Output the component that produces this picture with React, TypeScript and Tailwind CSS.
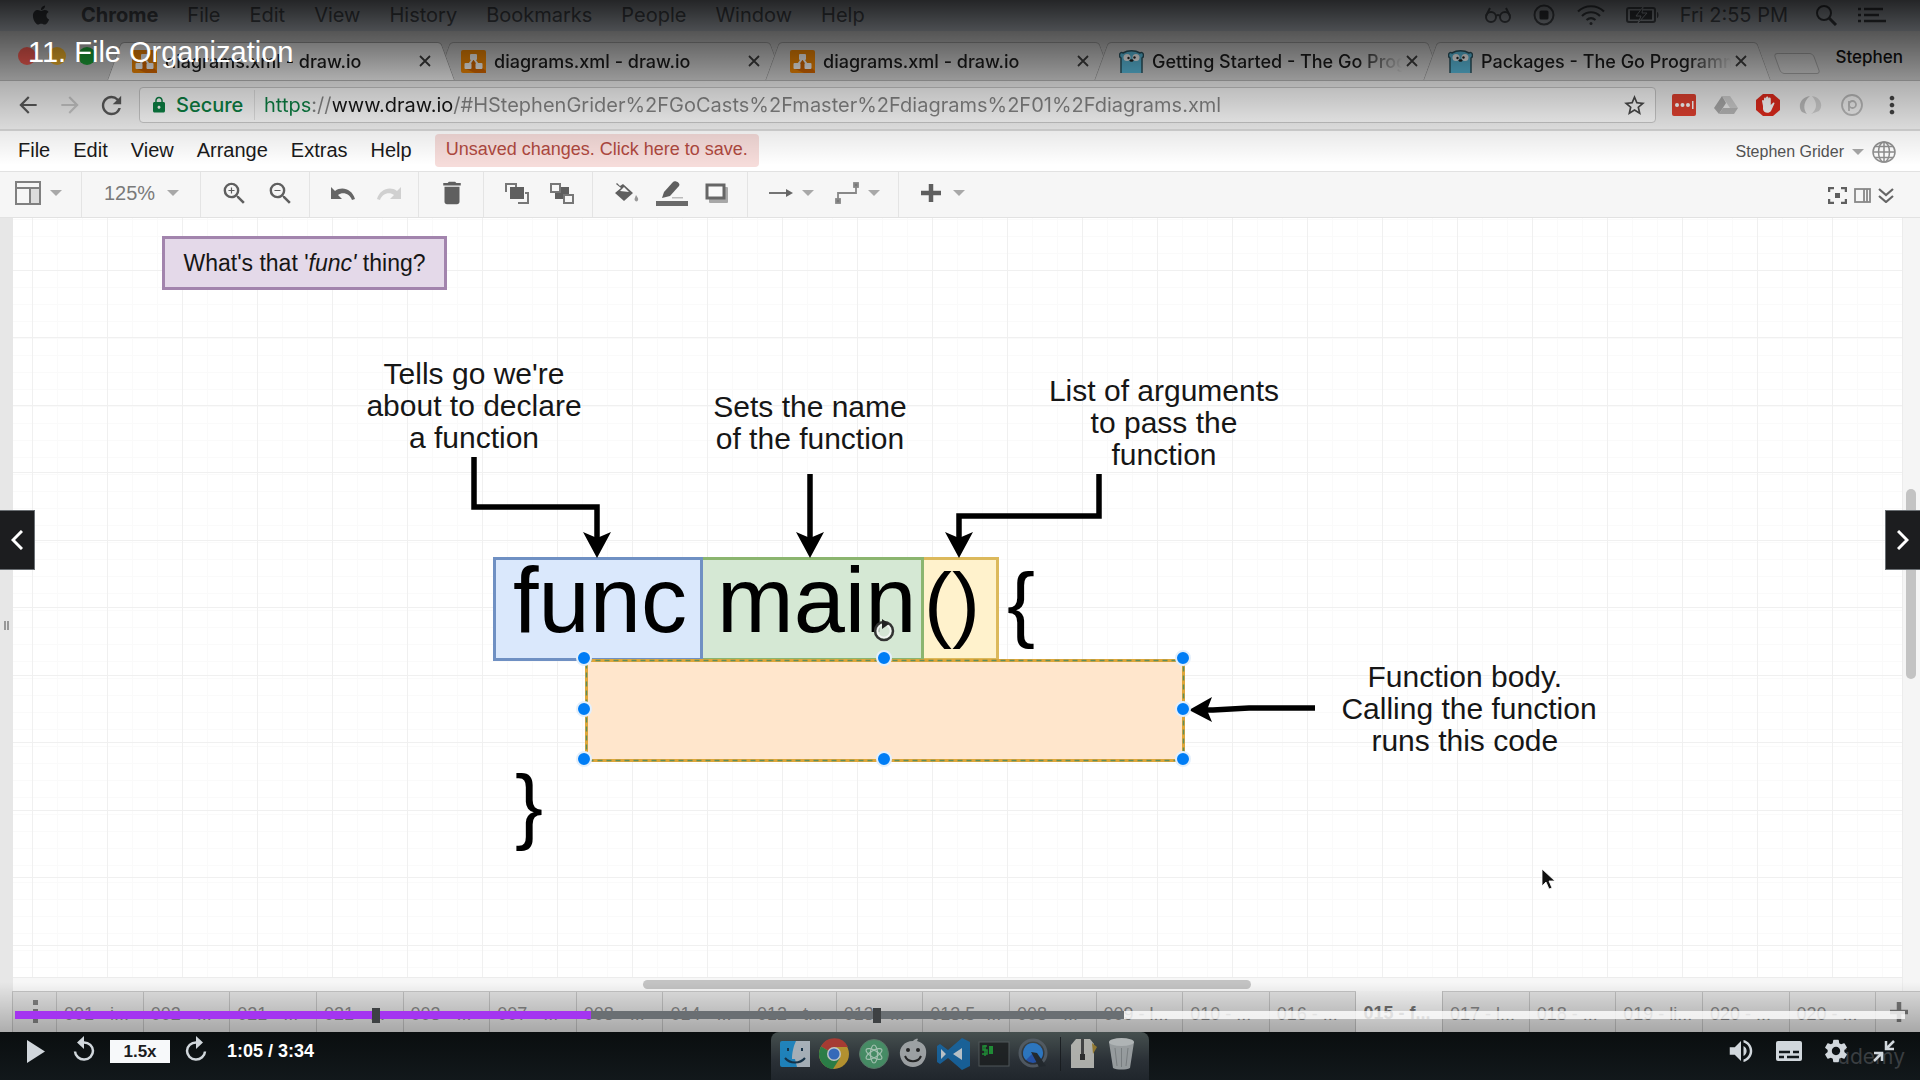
import type { CSSProperties, ReactNode } from "react";
import { FaApple } from "react-icons/fa";
import {
  MdArrowBack,
  MdArrowForward,
  MdRefresh,
  MdLock,
  MdMoreVert,
  MdDelete,
  MdZoomIn,
  MdZoomOut,
  MdVolumeUp,
  MdSettings,
  MdStarBorder,
} from "react-icons/md";

/* ---------- macOS menu bar ---------- */

const MENU_ITEMS = ["File", "Edit", "View", "History", "Bookmarks", "People", "Window", "Help"];

function MenuBar() {
  return (
    <header className="flex h-[31px] shrink-0 items-center justify-between bg-[#b4bac2] pb-[2px] pl-[30px] pr-[34px] font-[Inter,sans-serif] text-[20px] leading-none text-[#4d5157]">
      <nav className="flex items-center gap-[29px]">
        <FaApple className="size-[22px] text-[#3a3d42]" />
        <button className="font-bold">Chrome</button>
        {MENU_ITEMS.map((m) => (
          <button key={m}>{m}</button>
        ))}
      </nav>
      <div className="flex items-center gap-[20px]">
        <svg width="28" height="18" viewBox="0 0 28 18" fill="none" stroke="currentColor" strokeWidth="2">
          <circle cx="7" cy="11" r="5" />
          <circle cx="21" cy="11" r="5" />
          <path d="M12 10c1-1.500 3-1.500 4 0M2 10L6 2M26 10L22 2" />
        </svg>
        <svg width="24" height="22" viewBox="0 0 24 22">
          <circle cx="12" cy="11" r="9.500" fill="none" stroke="currentColor" strokeWidth="2" />
          <rect x="7.500" y="6.500" width="9" height="9" rx="1.500" fill="#3a3d42" />
        </svg>
        <svg width="30" height="22" viewBox="0 0 30 22" fill="none" stroke="#43474c" strokeWidth="2.200">
          <path d="M2 7.500C9 .5 21 .5 28 7.500M6 12c5-5 13-5 18 0M10.500 16c3-2.500 6-2.500 9 0" />
          <circle cx="15" cy="19.500" r="1.500" fill="#43474c" stroke="none" />
        </svg>
        <svg width="34" height="18" viewBox="0 0 34 18">
          <rect x="1" y="2" width="28" height="14" rx="2" fill="none" stroke="currentColor" strokeWidth="2" />
          <rect x="4" y="4.500" width="22" height="9" fill="#3a3d42" />
          <path d="M17 1l-7 9h5l-3 7 9-10h-5z" fill="#3a3d42" stroke="#b4bac2" />
          <path d="M31 6c2 0 2 6 0 6z" fill="currentColor" />
        </svg>
        <span className="mr-1.5">Fri 2:55 PM</span>
        <svg width="24" height="22" viewBox="0 0 24 22" fill="none" stroke="#3a3d42" strokeWidth="2">
          <circle cx="10" cy="9" r="7" />
          <path d="M15 14l7 7" strokeWidth="3" />
        </svg>
        <svg width="28" height="18" viewBox="0 0 28 18" stroke="#3a3d42" strokeWidth="2.500">
          <path d="M0 3h3M0 9h3M0 15h3M6 3h19M6 9h15M6 15h22" />
        </svg>
      </div>
    </header>
  );
}

/* ---------- Browser tabs ---------- */

function DrawioIcon() {
  return (
    <svg width="25" height="23" viewBox="0 0 25 23" className="shrink-0">
      <rect width="25" height="23" rx="2" fill="#f08705" />
      <path d="M12 9l13 12v2H14L5 19z" fill="#d86800" />
      <path d="M12.500 8L7 16M12.500 8L18 16" stroke="#fff" strokeWidth="2" />
      <rect x="9" y="4" width="7" height="6" rx="1" fill="#fff" />
      <rect x="3.500" y="13" width="7" height="6" rx="1" fill="#fff" />
      <rect x="14.500" y="13" width="7" height="6" rx="1" fill="#fff" />
    </svg>
  );
}

function GopherIcon() {
  return (
    <svg width="25" height="23" viewBox="0 0 25 23" className="shrink-0">
      <path d="M2 23V8C-1 6 1 1 4 3c5-3 12-3 17 0 3-2 5 3 2 5v15z" fill="#5dc0e2" />
      <path d="M2 23V8C-1 6 1 1 4 3c5-3 12-3 17 0 3-2 5 3 2 5v15" fill="none" stroke="#2d5562" strokeWidth="1.500" />
      <circle cx="8" cy="7.500" r="3.500" fill="#fff" />
      <circle cx="17" cy="7.500" r="3.500" fill="#fff" />
      <circle cx="9.500" cy="8" r="1.200" fill="#222" />
      <circle cx="15.500" cy="7.500" r="1.200" fill="#222" />
      <ellipse cx="12.500" cy="10.500" rx="2" ry="1.300" fill="#222" />
    </svg>
  );
}

function Tab({ title, icon, active }: { title: string; icon: ReactNode; active?: boolean }) {
  const fill = active ? "bg-[#f0f0f0] " : "bg-[#d2d2d2] ";
  return (
    <div className={"relative flex h-[38px] w-[329px] shrink-0 items-center pl-[18px] " + (active ? "z-10" : "")}>
      <span className={fill + "absolute inset-y-0 left-0 w-1/2 -skew-x-[20deg] rounded-tl border-l border-t border-[#a0a0a0]"} />
      <span className={fill + "absolute -right-1 inset-y-0 w-1/2 skew-x-[20deg] rounded-tr border-r border-t border-[#a0a0a0]"} />
      <span className={fill + "absolute inset-x-[100px] inset-y-0 border-t border-[#a0a0a0]"} />
      <div className="relative flex w-full items-center">
        {icon}
        <span className="ml-2 w-[258px] overflow-hidden whitespace-nowrap mask-r-from-80% mask-r-to-97% text-[18px] font-medium text-[#1c1c1c]">
          {title}
        </span>
        <button aria-label="Close tab" className="-ml-1 shrink-0">
          <svg width="12" height="12" viewBox="0 0 12 12" stroke="#3c3c3c" strokeWidth="1.800">
            <path d="M1 1l10 10M11 1L1 11" />
          </svg>
        </button>
      </div>
    </div>
  );
}

function TabStrip() {
  return (
    <div className="isolate flex h-[50px] shrink-0 items-end overflow-hidden border-b border-[#b5b5b5] bg-[#cacaca] font-[Inter,sans-serif]">
      <div className="flex h-full w-[114px] shrink-0 items-center gap-3 pl-[18px]">
        <span className="size-[18px] rounded-full bg-[#fb5f55]" />
        <span className="size-[18px] rounded-full bg-[#f5b62b]" />
        <span className="size-[18px] rounded-full bg-[#1fa83a]" />
      </div>
      <Tab active title="diagrams.xml - draw.io" icon={<DrawioIcon />} />
      <Tab title="diagrams.xml - draw.io" icon={<DrawioIcon />} />
      <Tab title="diagrams.xml - draw.io" icon={<DrawioIcon />} />
      <Tab title="Getting Started - The Go Programming" icon={<GopherIcon />} />
      <Tab title="Packages - The Go Programming" icon={<GopherIcon />} />
      <button
        aria-label="New tab"
        className="mb-[6px] ml-[18px] h-[21px] w-[40px] shrink-0 skew-x-[20deg] rounded border border-[#a0a0a0] bg-[#cfcfcf]"
      />
      <span className="mb-3 ml-auto pr-[17px] text-[17px] font-medium leading-[22px] text-[#111]">Stephen</span>
    </div>
  );
}

/* ---------- Address bar ---------- */

function AddressBar() {
  return (
    <div className="flex h-[50px] shrink-0 items-center border-b-2 border-[#dadada] bg-[#f1f1f1] pl-[15px] pr-[14px] font-[Inter,sans-serif] text-[20px]">
      <button aria-label="Back">
        <MdArrowBack className="size-[26px] text-[#5a5a5a]" />
      </button>
      <button aria-label="Forward" className="ml-4">
        <MdArrowForward className="size-[26px] text-[#c8c8c8]" />
      </button>
      <button aria-label="Reload" className="ml-[14px]">
        <MdRefresh className="size-[29px] text-[#5a5a5a]" />
      </button>
      <div className="ml-[13px] flex h-[36px] flex-1 items-center rounded border border-[#c9c9c9] bg-[#fcfcfc] pl-2.5 pr-2">
        <MdLock className="size-[18px] text-[#0b8043]" />
        <span className="ml-2 w-[78px] font-medium text-[#0b8043]">Secure</span>
        <input
          aria-label="Address"
          readOnly
          value="https://www.draw.io/#HStephenGrider%2FGoCasts%2Fmaster%2Fdiagrams%2F01%2Fdiagrams.xml"
          className="min-w-0 flex-1 border-l border-[#e2e2e2] bg-[linear-gradient(90deg,#0b8043_58px,#858585_58px,#858585_78px,#161616_78px,#161616_198px,#858585_198px)] bg-clip-text pl-[9px] text-transparent outline-none"
        />
        <button aria-label="Bookmark">
          <MdStarBorder className="size-[25px] text-[#4a4a4a]" />
        </button>
      </div>
      <div className="flex items-center gap-[18px] pl-[16px]">
        <svg width="24" height="22" viewBox="0 0 24 22">
          <rect width="24" height="22" rx="2" fill="#e0402f" />
          <g fill="#fff">
            <circle cx="5" cy="11" r="2" />
            <circle cx="10.500" cy="11" r="2" />
            <circle cx="16" cy="11" r="2" />
            <rect x="20" y="7" width="1.500" height="8" />
          </g>
        </svg>
        <svg width="24" height="20" viewBox="0 0 24 20">
          <path d="M8 1h8l8 12H16z" fill="#cfcfcf" />
          <path d="M8 1l4 7-7 11-5-6z" fill="#a9a9a9" />
          <path d="M9 13h15l-4 6H5z" fill="#b9b9b9" />
        </svg>
        <svg width="24" height="22" viewBox="0 0 24 22">
          <path d="M7 0h10l7 6v10l-7 6H7l-7-6V6z" fill="#df2a1c" />
          <path
            d="M7 12l-1-5c0-1.500 2-1.500 2 0V5c0-2 2-2 2 0V4c0-2 2.500-2 2.500 0v1c0-2 2.300-2 2.300 0v6l2-2c1.500-1 2.200 0 1.200 1.500L15 17c-2 3-8 2-8-2z"
            fill="#fff"
          />
        </svg>
        <svg width="24" height="20" viewBox="0 0 24 20">
          <path d="M12 1C3 2-1 11 4 17l5 2C5 14 5 7 12 1z" fill="#bdbdbd" />
          <path d="M14 1c8 1 12 9 7 15l-8 3c6-4 7-11 1-18z" fill="#d0d0d0" />
        </svg>
        <svg width="24" height="22" viewBox="0 0 24 22" fill="none" stroke="#b9b9b9" strokeWidth="1.800">
          <circle cx="12" cy="11" r="10" />
          <circle cx="12.500" cy="10.500" r="3.500" />
          <path d="M9 7v10" />
        </svg>
        <button aria-label="Browser menu" className="-ml-1">
          <MdMoreVert className="size-[28px] text-[#444]" />
        </button>
      </div>
    </div>
  );
}

/* ---------- draw.io ---------- */

const APP_MENU = ["File", "Edit", "View", "Arrange", "Extras", "Help"];

function AppMenu() {
  return (
    <div className="flex h-[40px] shrink-0 items-center justify-between bg-white pb-[2px] pl-[18px] pr-[24px]">
      <div className="flex items-center gap-[23px] text-[20px] leading-none text-[#1a1a1a]">
        {APP_MENU.map((m) => (
          <button key={m}>{m}</button>
        ))}
        <button className="h-[33px] whitespace-nowrap rounded bg-[#f6dcda] px-[11px] pb-[2px] text-[18px] text-[#b0493f]">
          Unsaved changes. Click here to save.
        </button>
      </div>
      <div className="flex items-center gap-2 pt-1">
        <button className="flex items-center gap-2 text-[16px] text-[#555]">
          Stephen Grider
          <Caret />
        </button>
        <svg width="24" height="22" viewBox="0 0 24 22" fill="none" stroke="#909090" strokeWidth="1.500">
          <ellipse cx="12" cy="11" rx="11" ry="10" />
          <ellipse cx="12" cy="11" rx="5.500" ry="10" />
          <path d="M12 1v20M1 11h22M3 5.500h18M3 16.500h18" />
        </svg>
      </div>
    </div>
  );
}

function Caret() {
  return (
    <svg width="12" height="6" viewBox="0 0 12 6" className="shrink-0">
      <path d="M0 0h12L6 6z" fill="#a8a8a8" />
    </svg>
  );
}

function Group({ className, children }: { className: string; children: ReactNode }) {
  return (
    <div className={"flex h-full shrink-0 items-center border-r border-[#e4e4e4] pb-[3px] " + className}>{children}</div>
  );
}

function Toolbar() {
  return (
    <div className="flex h-[47px] shrink-0 items-center border-y border-[#e2e2e2] bg-[#f6f6f6] pr-[26px] text-[#5f5f5f]">
      <Group className="w-[82px] gap-[9px] pl-[15px]">
        <svg width="26" height="24" viewBox="0 0 26 24" fill="none" stroke="#808080" strokeWidth="2">
          <rect x="15" y="7" width="10" height="16" fill="#ddd" stroke="none" />
          <rect x="1" y="1" width="24" height="22" />
          <path d="M1 7h24M15 7v16" />
        </svg>
        <Caret />
      </Group>
      <Group className="w-[119px] pl-[22px]">
        <button className="flex items-center gap-[12px] text-[20px] text-[#7a7a7a]">
          125% <Caret />
        </button>
      </Group>
      <Group className="w-[109px] gap-[17px] pl-[19px]">
        <button aria-label="Zoom in">
          <MdZoomIn className="size-[29px]" />
        </button>
        <button aria-label="Zoom out">
          <MdZoomOut className="size-[29px]" />
        </button>
      </Group>
      <Group className="w-[109px] gap-[22px] pl-[21px]">
        <svg width="24" height="14" viewBox="0 0 24 14">
          <path d="M0 1v12h11L7 9c5-4 12-1 14 5l3-1C21 3 11 0 4 5z" fill="#666" />
        </svg>
        <svg width="24" height="14" viewBox="0 0 24 14">
          <path d="M24 1v12H13l4-4C12 5 5 8 3 14l-3-1C3 3 13 0 20 5z" fill="#d0d0d0" />
        </svg>
      </Group>
      <Group className="w-[65px] pl-[18px]">
        <button aria-label="Delete">
          <MdDelete className="size-[30px]" />
        </button>
      </Group>
      <Group className="w-[109px] gap-[21px] pl-[21px]">
        <svg width="24" height="21" viewBox="0 0 24 21" fill="none" stroke="#777" strokeWidth="2">
          <path d="M1 9V1h10v3M13 20h10V10h-3" />
          <rect x="5" y="4" width="14" height="12" fill="#5f5f5f" stroke="none" />
        </svg>
        <svg width="24" height="21" viewBox="0 0 24 21" stroke="#777" strokeWidth="2">
          <rect x="5" y="4" width="14" height="12" fill="#5f5f5f" stroke="none" />
          <rect x="1" y="1" width="9" height="8" fill="#f6f6f6" />
          <rect x="14" y="12" width="9" height="8" fill="#f6f6f6" />
        </svg>
      </Group>
      <Group className="w-[155px] gap-[17px] pl-[22px]">
        <svg width="24" height="22" viewBox="0 0 24 22" fill="#5f5f5f">
          <path d="M2 1l3 3 3-2 10 9-9 8L0 11l6-5-5-4z" />
          <path d="M5 9l4-4 5 5z" fill="#f6f6f6" />
          <path d="M21 13c2 3 3 4 1.500 6-1 1-3 0-3-2z" fill="#999" />
        </svg>
        <svg width="32" height="26" viewBox="0 0 32 26">
          <path d="M6 18l2-6 9-10c2-2 8 1 6 4l-9 10z" fill="#5f5f5f" />
          <rect x="16" y="17" width="11" height="1.500" fill="#bbb" />
          <rect y="21" width="32" height="5" fill="#6a6a6a" />
        </svg>
        <svg width="24" height="20" viewBox="0 0 24 20">
          <rect x="4" y="4" width="19" height="16" rx="1" fill="#a8a8a8" />
          <rect x="2" y="2" width="17" height="13" fill="#f9f9f9" stroke="#666" strokeWidth="3" />
        </svg>
      </Group>
      <Group className="w-[151px] gap-[9px] pl-[21px]">
        <svg width="24" height="10" viewBox="0 0 24 10">
          <path d="M0 5h18" stroke="#666" strokeWidth="1.800" />
          <path d="M17 1l7 4-7 4z" fill="#666" />
        </svg>
        <Caret />
        <svg width="24" height="22" viewBox="0 0 24 22" fill="none" stroke="#888" strokeWidth="1.800" className="ml-3">
          <path d="M3 19V11h18V3" />
          <rect x="1" y="17" width="4" height="4" fill="#777" />
          <rect x="19" y="1" width="4" height="4" fill="#777" />
        </svg>
        <Caret />
      </Group>
      <button aria-label="Insert" className="ml-[22px] flex items-center gap-3 pb-[3px]">
        <svg width="20" height="18" viewBox="0 0 20 18" stroke="#5f5f5f" strokeWidth="4.500">
          <path d="M10 0v18M0 9h20" />
        </svg>
        <Caret />
      </button>
      <div className="ml-auto flex items-center gap-[7px] pt-[2px]">
        <svg width="19" height="17" viewBox="0 0 19 17" fill="none" stroke="#5f5f5f" strokeWidth="2.500">
          <path d="M1 5V1h5M13 1h5v4M18 12v4h-5M6 16H1v-4" />
          <rect x="7" y="6" width="5" height="5" fill="#5f5f5f" stroke="none" />
        </svg>
        <svg width="17" height="15" viewBox="0 0 17 15" fill="none" stroke="#888" strokeWidth="1.800">
          <rect x="1" y="1" width="15" height="13" />
          <path d="M10 1v13M13 1v13" />
        </svg>
        <svg width="16" height="15" viewBox="0 0 16 15" fill="none" stroke="#666" strokeWidth="2.200">
          <path d="M1 1l7 6 7-6M1 8l7 6 7-6" />
        </svg>
      </div>
    </div>
  );
}

/* Diagram nodes live on a free canvas, so each has a place of its own. */

function Note({ className, lines }: { className: string; lines: string[] }) {
  return (
    <p className={"absolute w-[300px] text-center text-[30px] leading-[32px] text-[#161616] " + className}>
      {lines.map((l) => (
        <span key={l} className="block whitespace-pre">
          {l}
        </span>
      ))}
    </p>
  );
}

const HANDLES = [
  [571, 440],
  [871, 440],
  [1170, 440],
  [571, 491],
  [1170, 491],
  [571, 541],
  [871, 541],
  [1170, 541],
];

const GRID: CSSProperties = {
  backgroundImage:
    "linear-gradient(90deg,#f0f0f0 1px,transparent 1px),linear-gradient(#f0f0f0 1px,transparent 1px),linear-gradient(#f0f0f0 1px,transparent 1px),linear-gradient(90deg,#fafafa 1px,transparent 1px),linear-gradient(#fafafa 1px,transparent 1px)",
  backgroundSize: "75px 75px,75px 135px,75px 135px,25px 25px,17px 17px",
  backgroundPosition: "19px 0,0 52px,0 119px,19px 0,0 52px",
};

function Canvas() {
  return (
    <div className="relative min-h-[759px] flex-1 overflow-hidden bg-white" style={GRID}>
      <div className="absolute left-[149px] top-[18px] flex h-[54px] w-[285px] items-center justify-center border-[3px] border-[#a284ad] bg-[#e4d9e9] text-[23px] text-[#161616]">
        <span className="whitespace-nowrap">
          What's that '<i>func'</i> thing?
        </span>
      </div>

      <Note className="left-[311px] top-[140px]" lines={["Tells go we're", "about to declare", "a function"]} />
      <Note className="left-[647px] top-[173px]" lines={["Sets the name", "of the function"]} />
      <Note className="left-[1001px] top-[157px]" lines={["List of arguments", "to pass the", "function"]} />
      <Note className="left-[1306px] top-[443px]" lines={["Function body. ", "Calling the function", "runs this code "]} />

      <div className="absolute left-[480px] top-[339px] flex text-[92px] leading-[80px] text-black">
        <span className="h-[104px] w-[210px] border-[3px] border-[#6f90c3] bg-[#dae8fc] pl-[17px]">func</span>
        <span className="h-[104px] w-[221px] border-[3px] border-l-0 border-[#8bb56f] bg-[#d5e8d4] pl-[14px]">main</span>
        <span className="h-[104px] w-[75px] border-[3px] border-l-0 border-[#dcb95c] bg-[#fff2cc] text-[84px] leading-[86px]">
          ()
        </span>
        <span className="pl-2 pt-[3px] text-[84px] leading-[86px]">{"{"}</span>
      </div>
      <span className="absolute left-[502px] top-[544px] text-[84px] leading-[86px] text-black">{"}"}</span>

      <div className="absolute left-[572px] top-[441px] h-[103px] w-[600px] border-[3px] border-[#dfa63a] bg-[#ffe6cc]" />

      <svg className="absolute left-0 top-0" width="1400" height="700" viewBox="0 0 1400 700" fill="none">
        <rect x="573.500" y="442.500" width="597" height="100" stroke="#5f8f5c" strokeWidth="1.500" strokeDasharray="5 4" />
        <g stroke="#000" strokeWidth="5.500">
          <path d="M461 239V289H584V325" />
          <path d="M797 256V325" />
          <path d="M1086 256V298H946V325" />
          <path d="M1302 490H1236L1200 492H1192" />
        </g>
        <g fill="#000">
          <path d="M584 340l-14-26 14 6 14-6z" />
          <path d="M797 340l-14-26 14 6 14-6z" />
          <path d="M946 340l-14-26 14 6 14-6z" />
          <path d="M1176 492l23-13-5 13 5 12z" />
        </g>
        <g fill="#007df5" stroke="#e3effb" strokeWidth="2">
          {HANDLES.map(([x, y]) => (
            <circle key={x + "-" + y} cx={x} cy={y} r="7" />
          ))}
        </g>
        <circle cx="871" cy="413" r="9" fill="#d5e2d4" fillOpacity="0.8" stroke="#333" strokeWidth="2.500" />
        <circle cx="871" cy="413" r="6.500" stroke="#f4f4f4" strokeWidth="1.500" />
        <path d="M869 401l7 5-7 5z" fill="#222" />
      </svg>

      <svg className="absolute left-[1528px] top-[650px]" width="16" height="24" viewBox="0 0 16 24">
        <path d="M1 1v17l4-4 3 7 3-1-3-7h6z" fill="#111" stroke="#fff" strokeWidth="0.800" />
      </svg>
    </div>
  );
}

const SHEETS = [
  "001 - i...",
  "002 - ...",
  "021 - ...",
  "021 - ...",
  "003 - ...",
  "007 - ...",
  "008 - ...",
  "014 - ...",
  "012 - t...",
  "013 - ...",
  "013.5 -...",
  "008 - ...",
  "009 - l...",
  "010 - ...",
  "016 - ...",
  "015 - f...",
  "017 - l...",
  "018 - ...",
  "019 - li...",
  "020 - ...",
  "020 - ...",
];

function SheetTabs() {
  return (
    <div className="ml-3 flex h-[41px] shrink-0 border-t border-[#c4c4c4] bg-[#e0e0e0] text-[18px] text-[#858585]">
      <button aria-label="Pages" className="w-[45px] shrink-0 border-x border-[#c0c0c0] pl-[20px]">
        <svg width="5" height="24" viewBox="0 0 5 24" fill="#808080">
          <path d="M0 0h5v5H0zM0 9h5v5H0zM0 18h5v5H0z" />
        </svg>
      </button>
      {SHEETS.map((s, i) => (
        <button
          key={i}
          className={
            "min-w-0 flex-1 overflow-hidden whitespace-nowrap border-r border-[#bdbdbd] pl-[7px] pt-1 text-left " +
            (s.startsWith("015") ? "-mt-px bg-[#f4f4f4] font-bold text-[#707070]" : "")
          }
        >
          {s}
        </button>
      ))}
      <button aria-label="Add page" className="w-[44px] shrink-0 pl-[14px]">
        <svg width="18" height="20" viewBox="0 0 18 20" stroke="#777" strokeWidth="4.500">
          <path d="M9 0v20M0 10h18" />
        </svg>
      </button>
    </div>
  );
}

/* ---------- Dock ---------- */

function Dock() {
  return (
    <div className="flex h-[48px] shrink-0 justify-center bg-[#0f1517] bg-[linear-gradient(#0a0e0f,#12181b)]">
      <div className="flex w-[378px] items-start gap-[7px] rounded-t-lg bg-[linear-gradient(#46504f,#2a3036_60%,#20262c)] pl-[8px] pt-[5px] *:opacity-85">
        <svg width="32" height="36" viewBox="0 0 32 36">
          <rect x="1" y="4" width="30" height="26" rx="2" fill="#1d8fd0" />
          <path d="M17 4h14v26H18l-2-8h-3c0-7 2-14 4-18z" fill="#b9c3cc" />
          <path d="M9 11v3M23 11v3M6 21c5 6 15 6 20 0" fill="none" stroke="#12324a" strokeWidth="2" />
        </svg>
        <svg width="33" height="36" viewBox="0 0 33 36">
          <circle cx="16" cy="17" r="15" fill="#c9a02e" />
          <path d="M16 17L3 9.500A15 15 0 0 1 30 10H16z" fill="#b93a31" />
          <path d="M16 17L3 9.500A15 15 0 0 0 15 32l7-11z" fill="#2b8a4a" />
          <circle cx="16" cy="17" r="7" fill="#d7dce0" />
          <circle cx="16" cy="17" r="5.500" fill="#3672cf" />
        </svg>
        <svg width="32" height="36" viewBox="0 0 32 36" fill="none">
          <circle cx="16" cy="17" r="14.500" fill="#4a9a6c" stroke="#5f7f6e" />
          <g stroke="#b6d8c4" strokeWidth="1.200">
            <ellipse cx="16" cy="17" rx="3.500" ry="9" />
            <ellipse cx="16" cy="17" rx="3.500" ry="9" transform="rotate(60 16 17)" />
            <ellipse cx="16" cy="17" rx="3.500" ry="9" transform="rotate(-60 16 17)" />
          </g>
        </svg>
        <svg width="32" height="36" viewBox="0 0 32 36">
          <path d="M16 4c3-3 5-2 5-2l-1 2c8 2 10 8 9 14-1 7-6 12-13 12S4 25 3 18C2 11 7 4 16 4z" fill="#aeb2b4" />
          <circle cx="11" cy="13" r="2" fill="#222" />
          <circle cx="21" cy="13" r="2" fill="#222" />
          <path d="M8 19c3 7 13 7 16 0" fill="none" stroke="#222" strokeWidth="2" />
        </svg>
        <svg width="35" height="36" viewBox="0 0 35 36">
          <path d="M26 1l8 4v24l-8 4L12 21l-8 6-3-2V9l3-2 8 6z" fill="#1567a6" />
          <path d="M5 12l5 5-5 5zM26 11v12l-9-6z" fill="#cfd8de" />
        </svg>
        <svg width="32" height="36" viewBox="0 0 32 36">
          <rect x="1" y="5" width="30" height="24" fill="#1c1f20" stroke="#555c5e" />
          <path d="M9 9H5v4h4v4H4M7 8v11" stroke="#1d9a35" strokeWidth="1.500" fill="none" />
          <rect x="11" y="9" width="4" height="8" fill="#1d9a35" />
        </svg>
        <svg width="32" height="36" viewBox="0 0 32 36">
          <circle cx="16" cy="16" r="13" fill="none" stroke="#565f68" strokeWidth="3" />
          <circle cx="16" cy="16" r="10" fill="#2457b8" />
          <path d="M16 6a10 10 0 0 1 10 10c0 3-2 6-2 6l-8-6-7 7A10 10 0 0 1 16 6z" fill="#2c80d4" />
          <path d="M14 15l6 1 9 13-7 1z" fill="#22282d" />
        </svg>
        <span className="ml-1 h-[34px] w-px bg-[#161a1d]" />
        <svg width="32" height="36" viewBox="0 0 32 36">
          <path d="M3 8l5-6h14l4 5v24H3z" fill="#c4c4be" />
          <path d="M24 6l5 4-4 7z" fill="#a3832e" />
          <path d="M13 2v18h3V2" fill="#444" />
          <rect x="12" y="17" width="5" height="6" fill="#2d2d2d" />
        </svg>
        <svg width="30" height="36" viewBox="0 0 30 36">
          <path d="M2 5l4 26c4 2 13 2 17 0l4-26z" fill="#a8adaf" />
          <ellipse cx="14.500" cy="5" rx="12.500" ry="4" fill="#c4c8c9" />
          <path d="M8 11l2 18M21 11l-2 18M14.500 11v19" stroke="#868b8d" />
        </svg>
      </div>
    </div>
  );
}

/* ---------- Video player overlay ---------- */

function Player() {
  return (
    <>
      <div className="pointer-events-none absolute inset-x-0 top-0 h-[165px] bg-[linear-gradient(rgba(0,0,0,.8)_0,rgba(0,0,0,.58)_31px,rgba(0,0,0,.28)_80px,rgba(0,0,0,.09)_130px,transparent_165px)]" />
      <div className="pointer-events-none absolute inset-x-0 bottom-[48px] h-[50px] bg-[linear-gradient(transparent,rgba(0,0,0,.25))]" />

      <h1 className="absolute left-[28px] top-[34px] text-[29px] leading-[36px] text-white">11. File Organization</h1>

      <button
        aria-label="Previous"
        className="absolute left-0 top-[510px] flex h-[60px] w-[35px] items-center justify-center border border-l-0 border-[#6a6f73] bg-[#1c1d1f]"
      >
        <svg width="12" height="20" viewBox="0 0 12 20" fill="none" stroke="#fff" strokeWidth="3">
          <path d="M11 1l-9 9 9 9" />
        </svg>
      </button>
      <button
        aria-label="Next"
        className="absolute right-0 top-[510px] flex h-[60px] w-[35px] items-center justify-center border border-r-0 border-[#6a6f73] bg-[#1c1d1f]"
      >
        <svg width="12" height="20" viewBox="0 0 12 20" fill="none" stroke="#fff" strokeWidth="3">
          <path d="M1 1l9 9-9 9" />
        </svg>
      </button>

      <div className="absolute inset-x-[15px] bottom-[61px] h-2 bg-white/80">
        <div className="absolute inset-y-0 left-0 bg-[#6a6f73]" style={{ width: "58.7%" }} />
        <div className="absolute inset-y-0 left-0 bg-[#a435f0]" style={{ width: "30.5%" }} />
        <span className="absolute -top-[3px] h-[15px] w-2 bg-[#3e4143]" style={{ left: "18.9%" }} />
        <span className="absolute -top-[3px] h-[15px] w-2 bg-[#3e4143]" style={{ left: "45.4%" }} />
        <input
          type="range"
          aria-label="Seek"
          min={0}
          max={214}
          defaultValue={65}
          className="absolute inset-0 h-full w-full opacity-0"
        />
      </div>

      <div className="absolute inset-x-0 bottom-0 flex h-[58px] items-center justify-between pl-[27px] pr-[25px] text-[#d1d7dc]">
        <div className="flex items-center">
          <button aria-label="Play">
            <svg width="18" height="23" viewBox="0 0 18 23" fill="currentColor" className="block">
              <path d="M0 0l18 11.500L0 23z" />
            </svg>
          </button>
          <button aria-label="Rewind 5 seconds" className="-mt-1 ml-[28px]">
            <svg width="22" height="26" viewBox="0 0 22 26" fill="none" className="block">
              <path d="M2 15.500a9 8.500 0 1 0 9-9H9" stroke="currentColor" strokeWidth="2.500" />
              <path d="M11 0v13L4 6.500z" fill="currentColor" />
            </svg>
          </button>
          <button className="ml-[15px] h-[23px] w-[60px] bg-[#f7f9fa] text-[17px] font-bold leading-[23px] text-[#1c1d1f]">
            1.5x
          </button>
          <button aria-label="Forward 5 seconds" className="-mt-1 ml-[15px]">
            <svg width="22" height="26" viewBox="0 0 22 26" fill="none" className="block">
              <path d="M20 15.500a9 8.500 0 1 1-9-9h2" stroke="currentColor" strokeWidth="2.500" />
              <path d="M11 0v13l7-6.500z" fill="currentColor" />
            </svg>
          </button>
          <span className="ml-5 text-[18px] font-bold leading-[23px] text-white">1:05 / 3:34</span>
        </div>
        <div className="relative flex items-center">
          <span className="absolute -bottom-px -right-[10px] font-[Inter,sans-serif] text-[21px] leading-none text-[#3a3e41]">
            ûdemy
          </span>
          <button aria-label="Volume" className="relative">
            <MdVolumeUp className="size-[30px]" />
          </button>
          <button aria-label="Captions" className="relative ml-[20px]">
            <svg width="26" height="20" viewBox="0 0 26 20" className="block">
              <rect width="26" height="20" rx="2" fill="currentColor" />
              <path d="M3 11h11M17 11h6M3 16h5M11 16h12" stroke="#12181b" strokeWidth="2.500" />
            </svg>
          </button>
          <button aria-label="Settings" className="relative ml-[20px]">
            <MdSettings className="size-[28px]" />
          </button>
          <button aria-label="Exit full screen" className="relative ml-[23px]">
            <svg width="22" height="22" viewBox="0 0 22 22" fill="none" stroke="currentColor" strokeWidth="2.500" className="block">
              <path d="M21 1l-7 7M13 1v8h8M1 21l7-7M9 21v-8H1" />
            </svg>
          </button>
        </div>
      </div>
    </>
  );
}

export default function App() {
  return (
    <main className="relative flex min-h-screen flex-col overflow-hidden bg-[#0f1517] font-['Liberation_Sans',Arial,sans-serif]">
      <MenuBar />
      <TabStrip />
      <AddressBar />
      <AppMenu />
      <Toolbar />
      <div className="flex flex-1 bg-[#f5f5f5]">
        <div className="relative w-[13px] shrink-0 bg-[#e7e7e7]">
          <span className="absolute left-1 top-[403px] h-[9px] w-[5px] border-x-2 border-[#999]" />
        </div>
        <div className="flex min-w-0 flex-1 flex-col">
          <Canvas />
          <div className="flex h-[14px] shrink-0 items-center justify-center border-t border-[#ececec] bg-[#f7f7f7]">
            <span className="mr-[22px] h-[9px] w-[608px] rounded-full bg-[#c3c3c3]" />
          </div>
        </div>
        <div className="relative w-[18px] shrink-0 border-l border-[#ececec] bg-[#f5f5f5]">
          <span className="absolute right-1 top-[271px] h-[190px] w-[10px] rounded-full bg-[#c3c3c3]" />
        </div>
      </div>
      <div className="bg-[#e7e7e7]">
        <SheetTabs />
      </div>
      <Dock />
      <Player />
    </main>
  );
}
